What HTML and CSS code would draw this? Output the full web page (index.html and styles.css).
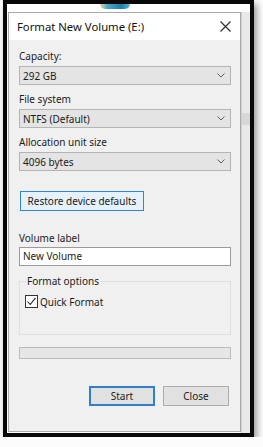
FILE: index.html
```html
<!DOCTYPE html>
<html>
<head>
    <title>Format New Volume (E:)</title>
    <link rel="stylesheet" href="styles.css">
</head>
<body>
    <!-- the pasted screenshot frame -->
    <div class="frame">
        <div class="backdrop-top"><span class="blob"></span></div>
        <div class="backdrop-row">
            <!-- the format dialog -->
            <div class="dialog">
                <div class="titlebar">
                    <span class="title">Format New Volume (E:)</span>
                    <svg class="close" width="11" height="11" viewBox="0 0 11 11">
                        <path d="M0.5 0.5 L10.5 10.5 M10.5 0.5 L0.5 10.5" stroke="#2b2b2b" stroke-width="1.1" fill="none"/>
                    </svg>
                </div>
                <div class="content">
                    <div class="label first">Capacity:</div>
                    <div class="select">
                        <span>292 GB</span>
                        <svg class="chev" width="8" height="5" viewBox="0 0 8 5"><polyline points="0.5,0.5 4,4 7.5,0.5" stroke="#606060" fill="none"/></svg>
                    </div>

                    <div class="label">File system</div>
                    <div class="select">
                        <span>NTFS (Default)</span>
                        <svg class="chev" width="8" height="5" viewBox="0 0 8 5"><polyline points="0.5,0.5 4,4 7.5,0.5" stroke="#606060" fill="none"/></svg>
                    </div>

                    <div class="label">Allocation unit size</div>
                    <div class="select">
                        <span>4096 bytes</span>
                        <svg class="chev" width="8" height="5" viewBox="0 0 8 5"><polyline points="0.5,0.5 4,4 7.5,0.5" stroke="#606060" fill="none"/></svg>
                    </div>

                    <button class="btn restore">Restore device defaults</button>

                    <div class="label volume">Volume label</div>
                    <div class="input">New Volume</div>

                    <fieldset class="options">
                        <legend>Format options</legend>
                        <div class="check">
                            <span class="box">
                                <svg width="11" height="11" viewBox="0 0 11 11"><polyline points="1.5,5.5 4.2,8.5 9.5,1.8" stroke="#222" stroke-width="1.1" fill="none"/></svg>
                            </span>
                            Quick Format
                        </div>
                    </fieldset>

                    <div class="progress"></div>

                    <div class="actions">
                        <button class="btn default">Start</button>
                        <button class="btn">Close</button>
                    </div>
                </div>
            </div>
            <!-- bit of the window behind -->
            <div class="edge"><span class="edge-bar"></span></div>
        </div>
    </div>
</body>
</html>
```

FILE: styles.css
```css
/* page around the pasted picture */
body {
    margin: 0;
    padding: 0 0 0 3px;
    background: #fcfcfc;
    font-family: "Noto Sans", "Liberation Sans", sans-serif;
    font-size: 10px;
    color: #1b1b1b;
}

/* black frame with a soft shadow */
.frame {
    box-sizing: border-box;
    width: 251px;
    height: 437px;
    border: 4px solid #080808;
    background: #ffffff;
    box-shadow: 3px 4px 7px rgba(0,0,0,0.4);
}

.backdrop-top {
    height: 8px;
    padding-left: 93px;
}
.blob {
    display: block;
    width: 30px;
    height: 5px;
    border-radius: 0 0 8px 8px;
    background: linear-gradient(90deg, #e8d9a0 0%, #4aa7c9 25%, #1e7fa8 70%, #5fb0d0 100%);
}

.backdrop-row {
    display: flex;
    height: 421px;
}

/* the dialog window */
.dialog {
    box-sizing: border-box;
    width: 233px;
    height: 420px;
    margin-left: 1px;
    border: 1px solid #a9a9a9;
    background: #f0f0f0;
}

.titlebar {
    display: flex;
    align-items: center;
    justify-content: space-between;
    height: 27px;
    padding: 0 9px 0 8px;
    background: #ffffff;
}
.title {
    font-size: 11.3px;
    color: #111;
}

.content {
    padding: 8px 9px 0 10px;
}

.label {
    height: 16px;
    line-height: 16px;
    margin-top: 6px;
}
.label.first { margin-top: 0; }
.label.volume { margin-top: 19px; }

/* the drop down boxes */
.select {
    box-sizing: border-box;
    display: flex;
    align-items: center;
    justify-content: space-between;
    height: 19px;
    margin-top: 2px;
    padding: 0 5px 0 3px;
    border: 1px solid #b4b4b4;
    background: #e4e4e4;
}

.btn {
    box-sizing: border-box;
    height: 20px;
    padding: 0;
    font-family: inherit;
    font-size: 10px;
    color: #1b1b1b;
    background: #e1e1e1;
    border: 1px solid #adadad;
}
.restore {
    display: block;
    width: 124px;
    margin: 20px 0 0 1px;
    background: #e5f1fb;
    border-color: #2f87d3;
}

.input {
    box-sizing: border-box;
    height: 19px;
    line-height: 17px;
    margin-top: 1px;
    padding-left: 3px;
    border: 1px solid #9a9a9a;
    background: #ffffff;
}

/* format options group */
.options {
    margin: 7px 0 0 0;
    padding: 6px 6px 26px 6px;
    border: 1px solid #e0e0e0;
    min-width: 0;
}
.options legend {
    padding: 0 1px;
    line-height: 16px;
}
.check {
    display: flex;
    align-items: center;
    height: 13px;
    margin-left: -1px;
}
.box {
    box-sizing: border-box;
    width: 13px;
    height: 13px;
    margin-right: 2px;
    border: 1px solid #333;
    background: #ffffff;
}
.box svg { display: block; }

.progress {
    box-sizing: border-box;
    height: 12px;
    margin-top: 12px;
    border: 1px solid #bcbcbc;
    background: #e6e6e6;
}

.actions {
    display: flex;
    justify-content: flex-end;
    gap: 8px;
    margin-top: 27px;
    padding-right: 2px;
}
.actions .btn { width: 66px; }
.actions .default {
    border: 2px solid #2f7fcc;
}

/* strip of the window behind the dialog */
.edge {
    flex: 1;
    background: #e9e9e9;
    border-left: 1px solid #d0d0d0;
    padding-top: 101px;
}
.edge-bar {
    display: block;
    height: 12px;
    background: #d7d7d7;
}
```
